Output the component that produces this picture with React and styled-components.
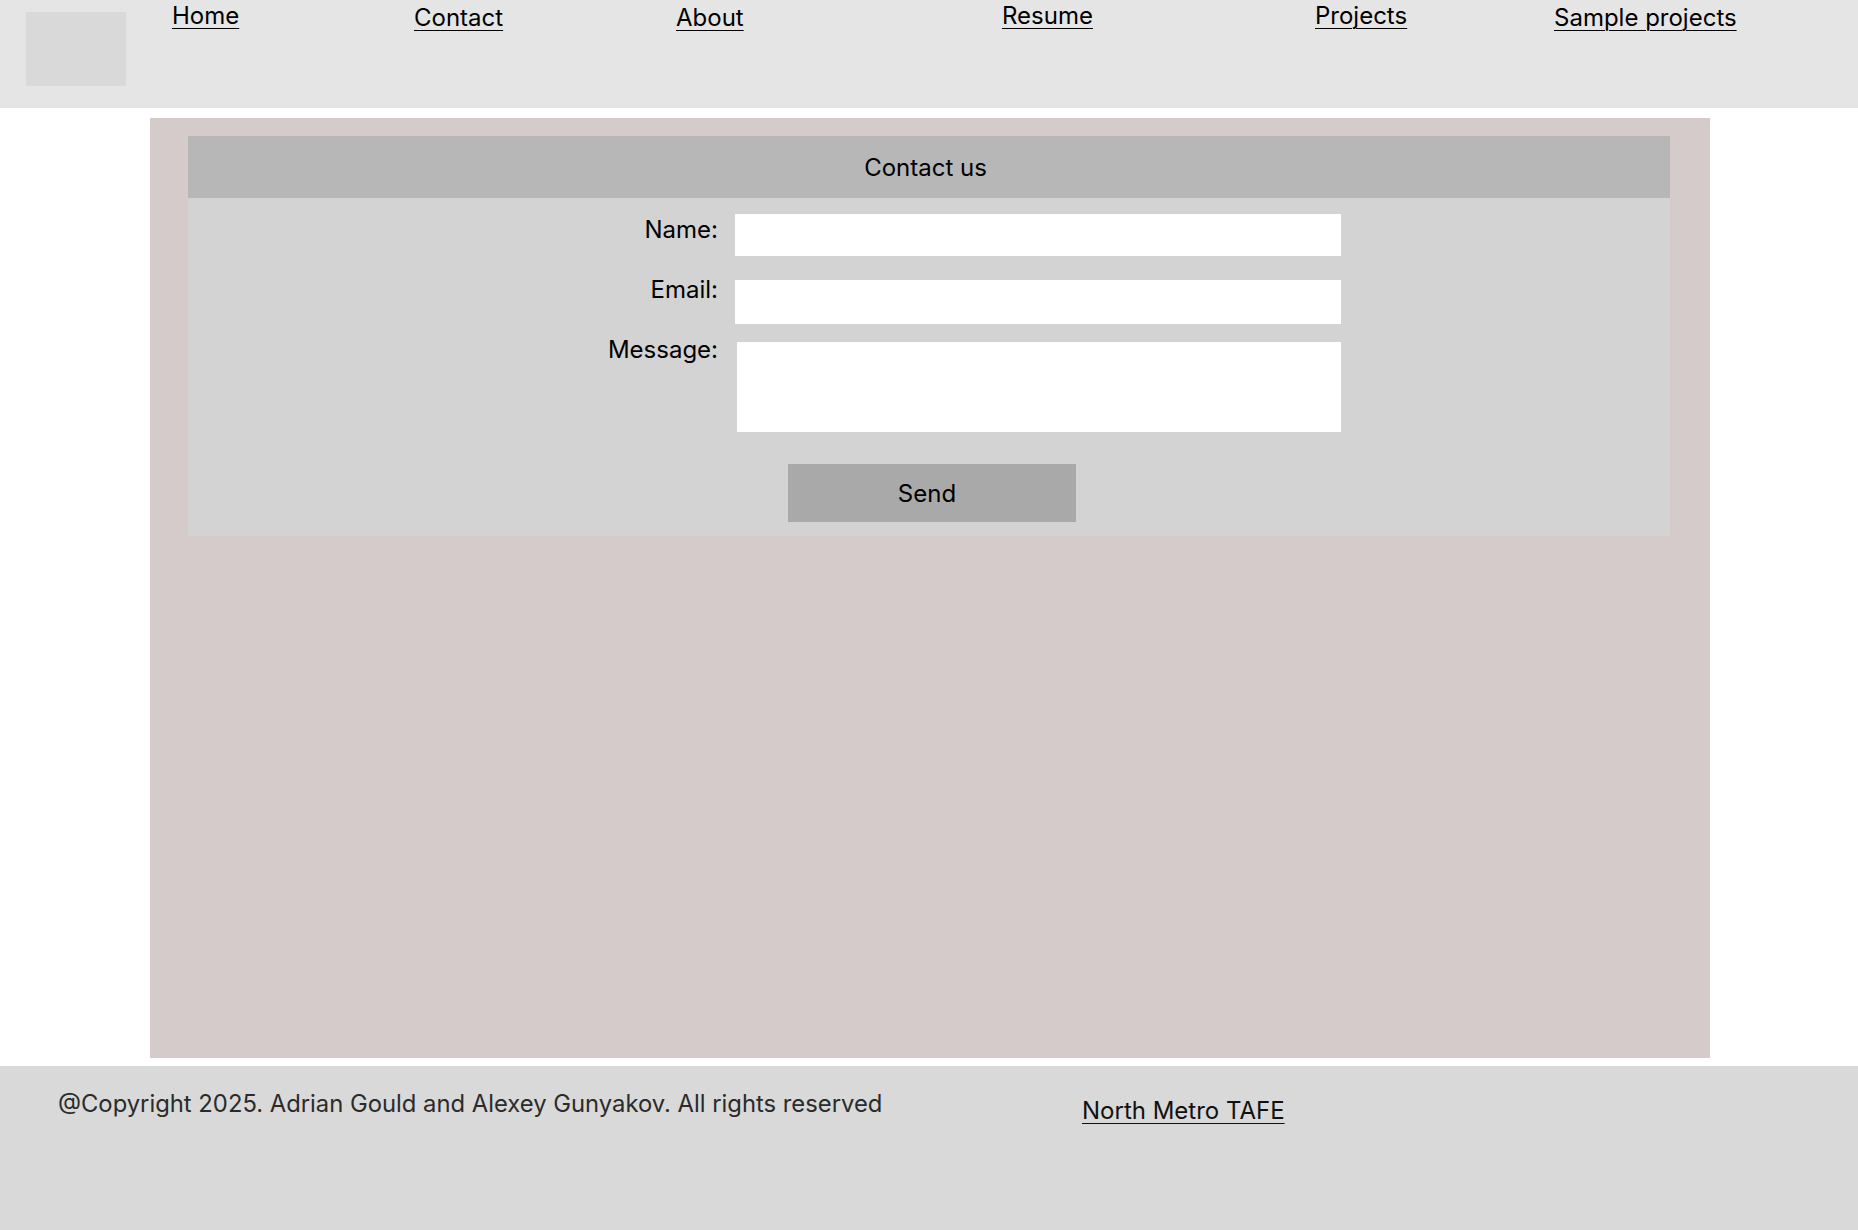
import styled, { createGlobalStyle } from 'styled-components'

const GlobalStyle = createGlobalStyle`
  html, body {
    margin: 0;
    padding: 0;
    background: #ffffff;
    font-family: Inter, "Noto Sans", "Liberation Sans", sans-serif;
  }
`

const Header = styled.header`
  display: flex;
  align-items: flex-start;
  height: 108px;
  background: #e5e5e5;
`

const Logo = styled.div`
  width: 100px;
  height: 74px;
  margin: 12px 0 0 26px;
  background: #d9d9d9;
`

const Nav = styled.nav`
  display: grid;
  grid-template-columns: 242px 262px 326px 313px 239px auto;
  margin-left: 46px;
`

const NavLink = styled.a`
  justify-self: start;
  margin-top: ${(p) => (p.$low ? '3px' : '1px')};
  font-size: 24px;
  line-height: 29px;
  color: #000;
  text-decoration: underline;
  text-underline-offset: 4px;
  text-decoration-thickness: 1px;
`

const Main = styled.main`
  box-sizing: border-box;
  width: 1560px;
  height: 940px;
  margin: 10px 0 8px 150px;
  padding: 18px 40px 0 38px;
  background: #d4cbca;
`

const Panel = styled.section`
  background: #d3d3d3;
`

const PanelTitle = styled.h2`
  margin: 0;
  height: 62px;
  display: flex;
  align-items: center;
  justify-content: center;
  padding-right: 7px;
  background: #b7b7b7;
  font-size: 24px;
  font-weight: 400;
  color: #000;
`

const Form = styled.form`
  display: flex;
  flex-direction: column;
  align-items: center;
  padding: 16px 0 14px;
`

const Fields = styled.div`
  display: flex;
  align-self: stretch;
  padding-left: 322px;
  gap: 17px;
`

const LabelCol = styled.div`
  display: flex;
  flex-direction: column;
  align-items: flex-end;
  width: 208px;
  margin-top: 1px;
`

const Label = styled.label`
  height: 60px;
  font-size: 24px;
  line-height: 29px;
  color: #000;
`

const FieldCol = styled.div`
  display: flex;
  flex-direction: column;
  width: 606px;
`

const Input = styled.input`
  box-sizing: border-box;
  height: ${(p) => p.$h}px;
  margin-bottom: ${(p) => p.$gap}px;
  border: none;
  background: #fff;
  outline: none;
`

const TextArea = styled.textarea`
  box-sizing: border-box;
  height: 90px;
  margin-left: 2px;
  border: none;
  background: #fff;
  resize: none;
  outline: none;
`

const SendButton = styled.button`
  width: 288px;
  height: 58px;
  margin: 32px 0 0 6px;
  padding: 0 10px 0 0;
  border: none;
  background: #a9a9a9;
  font-family: inherit;
  font-size: 24px;
  color: #000;
`

const Footer = styled.footer`
  box-sizing: border-box;
  display: grid;
  grid-template-columns: 1024px auto;
  align-items: start;
  height: 164px;
  padding: 23px 0 0 58px;
  background: #d9d9d9;
`

const Copyright = styled.p`
  margin: 0;
  font-size: 23.8px;
  line-height: 29px;
  color: #2b2b2b;
`

const FooterLink = styled.a`
  justify-self: start;
  margin-top: 7px;
  font-size: 24px;
  line-height: 29px;
  color: #111;
  text-decoration: underline;
  text-underline-offset: 4px;
  text-decoration-thickness: 1px;
`

const links = [
  { label: 'Home', low: false },
  { label: 'Contact', low: true },
  { label: 'About', low: true },
  { label: 'Resume', low: false },
  { label: 'Projects', low: false },
  { label: 'Sample projects', low: true },
]

export default function App() {
  return (
    <>
      <GlobalStyle />
      <Header>
        <Logo />
        <Nav>
          {links.map((l) => (
            <NavLink key={l.label} href="#" $low={l.low}>
              {l.label}
            </NavLink>
          ))}
        </Nav>
      </Header>
      <Main>
        <Panel>
          <PanelTitle>Contact us</PanelTitle>
          <Form onSubmit={(e) => e.preventDefault()}>
            <Fields>
              <LabelCol>
                <Label htmlFor="name">Name:</Label>
                <Label htmlFor="email">Email:</Label>
                <Label htmlFor="message">Message:</Label>
              </LabelCol>
              <FieldCol>
                <Input id="name" type="text" $h={42} $gap={24} />
                <Input id="email" type="email" $h={44} $gap={18} />
                <TextArea id="message" />
              </FieldCol>
            </Fields>
            <SendButton type="submit">Send</SendButton>
          </Form>
        </Panel>
      </Main>
      <Footer>
        <Copyright>@Copyright 2025. Adrian Gould and Alexey Gunyakov. All rights reserved</Copyright>
        <FooterLink href="#">North Metro TAFE</FooterLink>
      </Footer>
    </>
  )
}
